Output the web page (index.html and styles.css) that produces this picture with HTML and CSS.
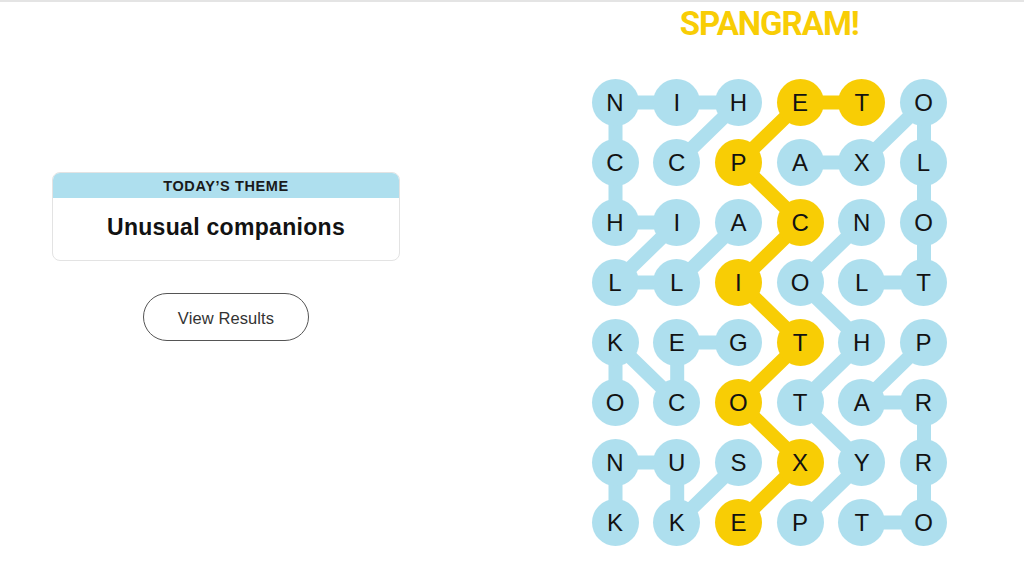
FILE: index.html
```html
<!DOCTYPE html>
<html lang="en">
<head>
<meta charset="utf-8">
<title>Strands</title>
<link rel="stylesheet" href="styles.css">
</head>
<body>
<main class="page">
  <section class="side">
    <div class="theme-card">
      <div class="theme-head">TODAY’S THEME</div>
      <div class="theme-body">Unusual companions</div>
    </div>
    <button class="results-btn" type="button">View Results</button>
  </section>
  <section class="play">
    <h1 class="spangram">SPANGRAM!</h1>
    <div class="board">
      <svg class="links" viewBox="0 0 355.5 467" width="355.5" height="467" aria-hidden="true">
        <g class="blue">
          <path d="M85.2 83.5 L146.9 23.5 L85.2 23.5 L23.5 23.5 L23.5 83.5 L23.5 143.5 L85.2 143.5 L23.5 203.5 L85.2 203.5 L146.9 143.5"/>
          <path d="M208.6 83.5 L270.3 83.5 L332 23.5 L332 203.5 L270.3 203.5"/>
          <path d="M208.6 443.5 L270.3 383.5 L208.6 323.5 L270.3 263.5 L208.6 203.5 L270.3 143.5"/>
          <path d="M146.9 263.5 L85.2 263.5 L85.2 323.5 L23.5 263.5 L23.5 323.5"/>
          <path d="M146.9 383.5 L85.2 443.5 L85.2 383.5 L23.5 383.5 L23.5 443.5"/>
          <path d="M332 263.5 L270.3 323.5 L332 323.5 L332 443.5 L270.3 443.5"/>
        </g>
        <g class="gold">
          <path d="M146.9 443.5 L208.6 383.5 L146.9 323.5 L208.6 263.5 L146.9 203.5 L208.6 143.5 L146.9 83.5 L208.6 23.5 L270.3 23.5"/>
        </g>
      </svg>
      <span class="cell">N</span><span class="cell">I</span><span class="cell">H</span><span class="cell span">E</span><span class="cell span">T</span><span class="cell">O</span>
      <span class="cell">C</span><span class="cell">C</span><span class="cell span">P</span><span class="cell">A</span><span class="cell">X</span><span class="cell">L</span>
      <span class="cell">H</span><span class="cell">I</span><span class="cell">A</span><span class="cell span">C</span><span class="cell">N</span><span class="cell">O</span>
      <span class="cell">L</span><span class="cell">L</span><span class="cell span">I</span><span class="cell">O</span><span class="cell">L</span><span class="cell">T</span>
      <span class="cell">K</span><span class="cell">E</span><span class="cell">G</span><span class="cell span">T</span><span class="cell">H</span><span class="cell">P</span>
      <span class="cell">O</span><span class="cell">C</span><span class="cell span">O</span><span class="cell">T</span><span class="cell">A</span><span class="cell">R</span>
      <span class="cell">N</span><span class="cell">U</span><span class="cell">S</span><span class="cell span">X</span><span class="cell">Y</span><span class="cell">R</span>
      <span class="cell">K</span><span class="cell">K</span><span class="cell span">E</span><span class="cell">P</span><span class="cell">T</span><span class="cell">O</span>
    </div>
  </section>
</main>
</body>
</html>
```

FILE: styles.css
```css
html, body {
  margin: 0;
  padding: 0;
  background: #ffffff;
}

body {
  border-top: 2px solid #e4e4e4;
  font-family: "Liberation Sans", Arial, sans-serif;
  color: #121212;
  height: 574px;
  overflow: hidden;
}

.page {
  display: flex;
  align-items: flex-start;
}

.side {
  width: 452px;
  padding-top: 170px;
  display: flex;
  flex-direction: column;
  align-items: center;
  flex-shrink: 0;
}

.theme-card {
  width: 348px;
  box-sizing: border-box;
  border: 1px solid #e3e3e3;
  border-radius: 8px;
  overflow: hidden;
}

.theme-head {
  height: 25px;
  line-height: 26px;
  background: #aedfee;
  text-align: center;
  font-size: 14.5px;
  font-weight: 700;
  letter-spacing: 0.6px;
  color: #1a1a1a;
}

.theme-body {
  height: 62px;
  box-sizing: border-box;
  padding-bottom: 3px;
  display: flex;
  align-items: center;
  justify-content: center;
  font-size: 23px;
  font-weight: 700;
  letter-spacing: 0.3px;
  color: #121212;
}

.results-btn {
  margin-top: 32px;
  width: 166px;
  height: 48px;
  border: 1px solid #555555;
  border-radius: 24px;
  background: #ffffff;
  font-family: "Liberation Sans", Arial, sans-serif;
  font-size: 16.5px;
  letter-spacing: 0.1px;
  color: #333333;
  padding: 3px 0 0;
}

.play {
  flex: 1;
  padding-left: 62.5px;
  display: flex;
  flex-direction: column;
  align-items: center;
}

.spangram {
  margin: 2px 0 0;
  height: 40px;
  line-height: 40px;
  font-family: Roboto, "Liberation Sans", sans-serif;
  font-size: 33px;
  font-weight: 700;
  letter-spacing: -1px;
  color: #f8cd05;
}

.board {
  position: relative;
  margin-top: 34.5px;
  display: grid;
  grid-template-columns: repeat(6, 47px);
  grid-auto-rows: 47px;
  column-gap: 14.7px;
  row-gap: 13px;
}

.links {
  position: absolute;
  left: 0;
  top: 0;
  z-index: 0;
  overflow: visible;
}

.links path {
  fill: none;
  stroke-width: 14;
  stroke-linejoin: round;
  stroke-linecap: round;
}

.links .blue path {
  stroke: #aedfee;
}

.links .gold path {
  stroke: #f8cd05;
}

.cell {
  position: relative;
  z-index: 1;
  width: 47px;
  height: 47px;
  border-radius: 50%;
  background: #aedfee;
  display: flex;
  align-items: center;
  justify-content: center;
  box-sizing: border-box;
  padding-top: 2px;
  font-size: 24px;
  color: #121212;
}

.cell.span {
  background: #f8cd05;
}
```
